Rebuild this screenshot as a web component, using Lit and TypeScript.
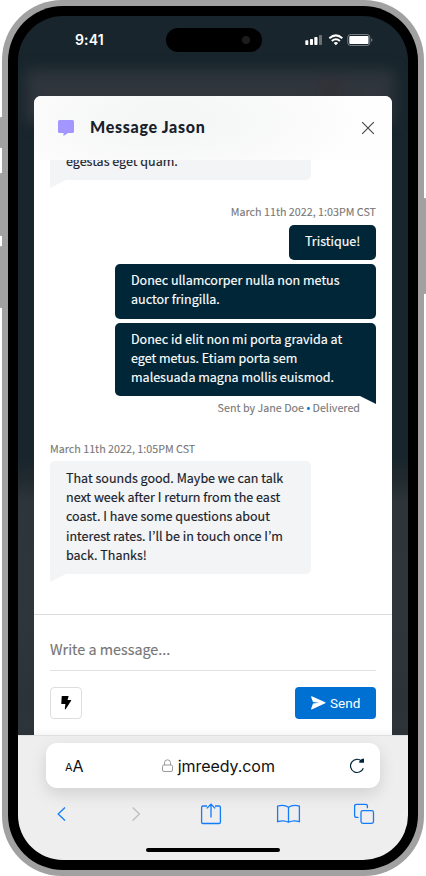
import { LitElement, html, css } from "lit";
import { customElement } from "lit/decorators.js";

@customElement("app-root")
export class AppRoot extends LitElement {
  static styles = css`
    :host { display: block; width: 426px; height: 876px; overflow: hidden; background: #fff; font-family: "Noto Sans CJK JP", sans-serif; color: #17212b; }
    * { box-sizing: border-box; }
    .device { position: relative; width: 426px; height: 876px; padding: 0 2px; }
    .key { position: absolute; background: #a1a1a1; width: 4px; }
    .mute { left: 0; top: 117px; height: 31px; border-radius: 1px 0 0 1px; }
    .up { left: 0; top: 173px; height: 63px; border-radius: 1px 0 0 1px; }
    .down { left: 0; top: 246px; height: 62px; border-radius: 1px 0 0 1px; }
    .power { right: 0; top: 198px; height: 96px; border-radius: 0 1px 1px 0; }
    .rim { position: relative; height: 876px; padding: 6px; background: #a1a1a1; border-radius: 60px; }
    .bezel { height: 864px; padding: 10px; background: #000; border-radius: 55px; }
    .screen { position: relative; height: 844px; border-radius: 45px; overflow: hidden; display: flex; flex-direction: column;
      background: linear-gradient(#18252c 0, #18252c 440px, #20292e 462px, #2d353b 486px, #2e363c 600px, #2b3338 690px, #2d353b 720px); }
    .haze { position: absolute; left: 8px; right: 14px; top: 54px; height: 52px; background: radial-gradient(circle at 304px 20px, #332f34 3px, transparent 16px), linear-gradient(#2f353d, #30363a); filter: blur(7px); }
    .status { position: relative; height: 80px; flex: none; display: flex; padding: 12px 34px 0 57px; justify-content: space-between; }
    .time { font: 600 14px/24px Inter, sans-serif; color: #fff; width: 91px; letter-spacing: .15px; }
    .island { width: 96px; height: 24px; border-radius: 12px; background: #000; display: flex; align-items: center; justify-content: flex-end; padding-right: 12px; }
    .lens { width: 8px; height: 8px; border-radius: 50%; background: #1c1c1c; }
    .signals { width: 69px; height: 24px; margin-left: 43px; }
    .sheet { position: relative; flex: 1; min-height: 0; margin: 0 16px; background: #fff; border-radius: 7px 7px 0 0; display: flex; flex-direction: column; }
    .head { position: relative; z-index: 1; height: 64px; flex: none; display: flex; align-items: center; padding: 0 16px 0 24px; border-radius: 7px 7px 0 0;
      background: radial-gradient(ellipse 190px 70px at 38% 38%, #f5f6f6 20%, #fafbfa 75%, #fefefe 100%); }
    .bubble-icon { width: 16px; height: 16px; margin-right: 16px; }
    h1 { margin: 0; flex: 1; font: 900 16px/24px Lato, sans-serif; letter-spacing: .7px; padding-bottom: 2px; color: #17212b; }
    .x { width: 16px; height: 16px; }
    .log { flex: 1; min-height: 0; padding: 0 16px; display: flex; flex-direction: column; }
    .msg { position: relative; width: 261px; height: 35px; padding: 6px 16px 0; border-radius: 5px; font-size: 12.530px; line-height: 19.200px; white-space: pre; flex: none; -webkit-text-stroke: .15px currentColor; }
    .two { height: 55px; }
    .three { height: 73px; }
    .five { height: 113px; padding-top: 7px; }
    .in { background: #f3f4f6; align-self: flex-start; }
    .out { background: #002638; color: #fff; align-self: flex-end; margin-bottom: 4px; }
    .short { width: 87px; }
    .tail-l { border-bottom-left-radius: 0; }
    .tail-r { border-bottom-right-radius: 0; }
    .tail-l::after, .tail-r::after { content: ""; position: absolute; top: 100%; width: 16px; height: 8px; background: inherit; }
    .tail-l::after { left: 0; clip-path: polygon(0 0, 100% 0, 0 100%); }
    .tail-r::after { right: 0; clip-path: polygon(0 0, 100% 0, 100% 100%); }
    .under { margin-top: -15px; }
    .meta { font-size: 10.740px; line-height: 16px; color: #777; white-space: pre; flex: none; -webkit-text-stroke: .1px currentColor; }
    .right { align-self: flex-end; }
    .first { margin: 24px 0 5px; }
    .sent { padding-right: 16px; margin: 0 0 25px; }
    .later { margin-bottom: 4px; }
    .dot { color: #0070d2; }
    .compose { height: 121px; flex: none; border-top: 1px solid #d9dbdc; padding: 0 16px; }
    .field { height: 56px; padding-top: 22px; border-bottom: 1px solid #dfe3e6; font-size: 14.350px; line-height: 24px; color: #767676; -webkit-text-stroke: .15px currentColor; }
    .actions { display: flex; justify-content: space-between; padding-top: 16px; }
    .bolt { width: 32px; height: 32px; border: 1px solid #dcdedf; border-radius: 4px; display: flex; align-items: center; justify-content: center; }
    .send { width: 81px; height: 32px; border-radius: 4px; background: #0070d2; color: #fff; display: flex; align-items: center; padding-left: 16px; gap: 4px; font: 400 13.500px/32px Roboto, sans-serif; }
    .browser { position: relative; height: 125px; flex: none; background: #eee; border-top: 1px solid #dfe0e1; padding: 7px 28px 0; box-shadow: 0 -1px 8px rgba(0,0,0,.06); }
    .address { height: 45px; border-radius: 11px; background: #fff; box-shadow: 0 6px 16px rgba(0,0,0,.12); display: flex; align-items: center; padding: 0 15px 0 19px; font: 400 16px/24px Inter, sans-serif; color: #111; }
    .small { font-size: 11px; padding-top: 3px; }
    .site { flex: 1; display: flex; align-items: center; justify-content: center; gap: 4px; padding-left: 4px; letter-spacing: -.07px; }
    .tools { position: relative; width: 334px; height: 52px; }
    .home { width: 134px; height: 4px; border-radius: 2px; background: #000; margin: 8px auto 0; }
    svg { display: block; flex: none; }
  `;

  render() {
    return html`<div class="device">
      <div class="key mute"></div><div class="key up"></div><div class="key down"></div><div class="key power"></div>
      <div class="rim"><div class="bezel"><div class="screen">
        <div class="haze"></div>
        <div class="status">
          <div class="time">9:41</div>
          <div class="island"><div class="lens"></div></div>
          <svg class="signals" viewBox="0 0 69 24" fill="#fff">
            <rect x=".3" y="12.300" width="3" height="4.700" rx=".8"/><rect x="5" y="11" width="3" height="6" rx=".8"/><rect x="9.300" y="9" width="3.200" height="8" rx=".8"/><rect x="14" y="7" width="3" height="10" rx=".8" opacity=".35"/>
            <path d="M24.300 10.200Q31 4.600 37.300 10.200M26.800 13Q31 9.600 34.900 13" fill="none" stroke="#fff" stroke-width="2"/><path d="M28.700 14.900Q30.900 13.200 33.100 14.900L30.900 17.200Z"/>
            <rect x="42.800" y="6.500" width="22" height="11" rx="2.800" fill="none" stroke="#fff" stroke-opacity=".4"/><rect x="44.300" y="8" width="19.200" height="8" rx="1"/><path d="M66 10Q69 12 66 14Z" opacity=".35"/>
          </svg>
        </div>
        <div class="sheet">
          <div class="head">
            <svg class="bubble-icon" viewBox="0 0 16 16"><path d="M1.500 0h13Q16 0 16 1.500v10Q16 13 14.500 13H10l-4.500 3v-3h-4Q0 13 0 11.500v-10Q0 0 1.500 0Z" fill="#a396ff"/></svg>
            <h1>Message Jason</h1>
            <svg class="x" viewBox="0 0 16 16" fill="none" stroke="#3c4349" stroke-width="1.100"><path d="M2.200 2.200 13.800 13.800M13.800 2.200 2.200 13.800"/></svg>
          </div>
          <div class="log">
            <div class="msg in tail-l under">egestas eget quam.</div>
            <div class="meta right first">March 11th 2022, 1:03PM CST</div>
            <div class="msg out short">Tristique!</div>
            <div class="msg out two">Donec ullamcorper nulla non metus
auctor fringilla.</div>
            <div class="msg out tail-r three">Donec id elit non mi porta gravida at
eget metus. Etiam porta sem
malesuada magna mollis euismod.</div>
            <div class="meta right sent">Sent by Jane Doe <span class="dot">•</span> Delivered</div>
            <div class="meta later">March 11th 2022, 1:05PM CST</div>
            <div class="msg in tail-l five">That sounds good. Maybe we can talk
next week after I return from the east
coast. I have some questions about
interest rates. I’ll be in touch once I’m
back. Thanks!</div>
          </div>
          <div class="compose">
            <div class="field">Write a message...</div>
            <div class="actions">
              <div class="bolt"><svg width="16" height="16" viewBox="0 0 16 16"><path d="M4.300 1h5.900q.6 0 .4.600L9.500 5h3.100q.9 0 .5.700L7.800 14q-.7.900-1 0L7.400 9H3.800q-.6 0-.5-.6L3.700 1.500Q3.800 1 4.300 1Z"/></svg></div>
              <div class="send"><svg width="15" height="14" viewBox="0 0 15 14" fill="#fff"><path d="M.8.300 14.200 6.200q.9.500 0 1L.8 13.500q-1 .2-.7-.8L2 7.600 8 6.800 2 6 .1 1.100Q-.1.200.8.300Z"/></svg>Send</div>
            </div>
          </div>
        </div>
        <div class="browser">
          <div class="address"><span class="small">A</span>A
            <div class="site"><svg width="12" height="14" viewBox="0 0 12 14" fill="none" stroke="#999"><rect x=".5" y="6" width="10" height="6.500" rx="1.500"/><path d="M2.500 6V3.800a3 3 0 0 1 6 0V6"/></svg>jmreedy.com</div>
            <svg width="16" height="16" viewBox="0 0 16 16" fill="none" stroke="#002638" stroke-width="1.200"><path d="M14.300 10.200A6.600 6.600 0 1 1 12.600 3"/><path d="M10.300 4.700V3.200L12.700 1l2.300-.5v4.200Z" fill="#002638" stroke="none"/></svg>
          </div>
          <svg class="tools" viewBox="46 788 334 52" fill="none" stroke="#147bfa" stroke-width="1.300">
            <path d="M65 807.500 58.200 814 65 820.500"/>
            <path d="M132.700 807.500 139.400 814l-6.700 6.500" stroke="#bdbdbd"/>
            <path d="M207 806h-4q-1.400 0-1.400 1.400v14.800q0 1.300 1.400 1.300h16q1.400 0 1.400-1.300v-14.800q0-1.400-1.400-1.400h-4M211 817.500v-13M206.800 808.400 211 804.200l4.200 4.200"/>
            <path d="M288.500 807.200q-4.500-2.900-10.900-1v15.500q6.400-1.900 10.900.6 4.500-2.500 10.900-.6v-15.500q-6.400-1.900-10.900 1v15.100"/>
            <rect x="361" y="810.600" width="12.500" height="12.800" rx="1.800"/><path d="M358.500 817.400h-2q-1.900 0-1.900-1.900v-9.300q0-1.800 1.900-1.800h9q1.900 0 1.900 1.800v2"/>
          </svg>
          <div class="home"></div>
        </div>
      </div></div></div>
    </div>`;
  }
}
